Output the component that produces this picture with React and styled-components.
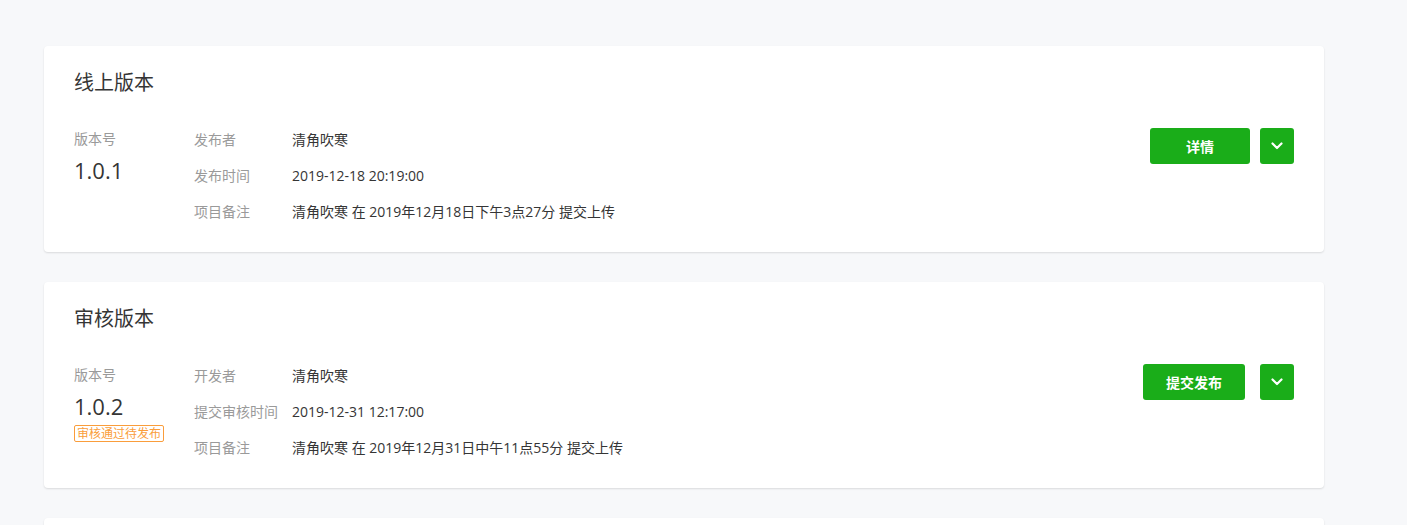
import React from 'react';
import styled, { createGlobalStyle } from 'styled-components';

const GlobalStyle = createGlobalStyle`
  html, body {
    margin: 0;
    padding: 0;
    background: #f7f8fa;
    font-family: 'Open Sans', 'Noto Sans CJK SC', sans-serif;
    color: #353535;
  }
`;

const versions = [
  {
    title: '线上版本',
    version: '1.0.1',
    rows: [
      ['发布者', '清角吹寒'],
      ['发布时间', '2019-12-18 20:19:00'],
      ['项目备注', '清角吹寒 在 2019年12月18日下午3点27分 提交上传'],
    ],
    action: '详情',
    actionWidth: 100,
    actionGap: 10,
  },
  {
    title: '审核版本',
    version: '1.0.2',
    badge: '审核通过待发布',
    rows: [
      ['开发者', '清角吹寒'],
      ['提交审核时间', '2019-12-31 12:17:00'],
      ['项目备注', '清角吹寒 在 2019年12月31日中午11点55分 提交上传'],
    ],
    action: '提交发布',
    actionWidth: 102,
    actionGap: 15,
  },
  {
    title: '开发版本',
    version: '1.0.3',
    rows: [
      ['开发者', '清角吹寒'],
      ['提交时间', '2020-01-02 10:00:00'],
      ['项目备注', '清角吹寒 在 2020年1月2日上午10点 提交上传'],
    ],
    action: '提交审核',
    actionWidth: 102,
    actionGap: 15,
  },
];

function Chevron() {
  return (
    <svg width="12" height="8" viewBox="0 0 12 8">
      <path d="M1.5 1.5 L6 6 L10.5 1.5" fill="none" stroke="#fff" strokeWidth="2.2" strokeLinecap="round" strokeLinejoin="round" />
    </svg>
  );
}

export default function App() {
  return (
    <>
      <GlobalStyle />
      <Page>
        {versions.map((v) => (
          <Card key={v.title}>
            <CardTitle>{v.title}</CardTitle>
            <CardBody>
              <VersionCol>
                <VersionLabel>版本号</VersionLabel>
                <VersionNumber>{v.version}</VersionNumber>
                {v.badge && <Badge>{v.badge}</Badge>}
              </VersionCol>
              <InfoList>
                {v.rows.map(([label, value]) => (
                  <InfoRow key={label}>
                    <InfoLabel>{label}</InfoLabel>
                    <InfoValue>{value}</InfoValue>
                  </InfoRow>
                ))}
              </InfoList>
              <Actions $gap={v.actionGap}>
                <PrimaryButton $width={v.actionWidth}>{v.action}</PrimaryButton>
                <DropButton>
                  <Chevron />
                </DropButton>
              </Actions>
            </CardBody>
          </Card>
        ))}
      </Page>
    </>
  );
}

const Page = styled.div`
  display: flex;
  flex-direction: column;
  gap: 30px;
  width: 1280px;
  padding: 46px 0 30px 44px;
`;

const Card = styled.div`
  background: #ffffff;
  border-radius: 4px;
  box-shadow: 0 1px 2px rgba(0, 0, 0, 0.12);
  padding: 22px 30px 23px 30px;
`;

const CardTitle = styled.h2`
  margin: 0;
  font-size: 20px;
  font-weight: 400;
  line-height: 30px;
  color: #353535;
`;

const CardBody = styled.div`
  display: flex;
  align-items: flex-start;
  margin-top: 23px;
`;

const VersionCol = styled.div`
  display: flex;
  flex-direction: column;
  align-items: flex-start;
  width: 120px;
  flex-shrink: 0;
`;

const VersionLabel = styled.span`
  font-size: 14px;
  line-height: 36px;
  color: #9a9a9a;
`;

const VersionNumber = styled.span`
  font-size: 22px;
  line-height: 26px;
  color: #353535;
`;

const Badge = styled.span`
  margin-top: 6px;
  padding: 0 2px;
  border: 1px solid #fa9d3b;
  border-radius: 2px;
  font-size: 12px;
  line-height: 15px;
  color: #fa9d3b;
`;

const InfoList = styled.div`
  display: flex;
  flex-direction: column;
  flex: 1;
`;

const InfoRow = styled.div`
  display: flex;
  height: 36px;
  align-items: center;
  font-size: 14px;
`;

const InfoLabel = styled.span`
  width: 98px;
  flex-shrink: 0;
  color: #9a9a9a;
`;

const InfoValue = styled.span`
  color: #353535;
`;

const Actions = styled.div`
  display: flex;
  gap: ${(p) => p.$gap}px;
  margin-top: 7px;
`;

const PrimaryButton = styled.button`
  width: ${(p) => p.$width}px;
  height: 36px;
  border: none;
  border-radius: 3px;
  background: #1aad19;
  color: #ffffff;
  font-family: inherit;
  font-size: 14px;
  font-weight: 700;
  cursor: pointer;
`;

const DropButton = styled.button`
  display: flex;
  align-items: center;
  justify-content: center;
  width: 34px;
  height: 36px;
  padding: 0;
  border: none;
  border-radius: 3px;
  background: #1aad19;
  cursor: pointer;
`;
